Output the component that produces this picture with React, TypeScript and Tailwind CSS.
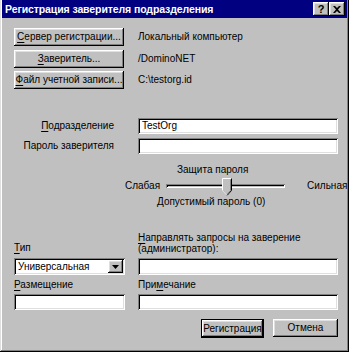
const raised =
  "shadow-[inset_-1px_-1px_#000,inset_1px_1px_#fff,inset_-2px_-2px_#808080,inset_2px_2px_#dfdfdf]";
const sunken =
  "shadow-[inset_1px_1px_#808080,inset_-1px_-1px_#fff,inset_2px_2px_#000,inset_-2px_-2px_#dfdfdf]";

function U({ children }: { children: string }) {
  return <span className="underline underline-offset-2">{children}</span>;
}

function Btn({ children, w = "w-[110px]", def = false }: { children: React.ReactNode; w?: string; def?: boolean }) {
  if (def) {
    return (
      <div className={`${w} h-[19px] border border-black bg-[#c0c0c0] flex-none`}>
        <div className={`h-full w-full flex items-center justify-center ${raised}`}>{children}</div>
      </div>
    );
  }
  return (
    <div className={`${w} h-[18px] bg-[#c0c0c0] flex-none flex items-center justify-center ${raised}`}>{children}</div>
  );
}

function Field({ w, h = "h-[16px]", children }: { w: string; h?: string; children?: React.ReactNode }) {
  return <div className={`${w} ${h} flex-none bg-white flex items-center pl-[4px] ${sunken}`}>{children}</div>;
}

export default function App() {
  return (
    <div
      className="w-[349px] h-[352px] bg-[#c0c0c0] text-black text-[10px] leading-[12px] whitespace-nowrap shadow-[inset_-1px_-1px_#000,inset_1px_0_#dfdfdf,inset_-2px_-2px_#808080,inset_2px_0_#fff] flex flex-col px-[2px] pb-[2px] overflow-hidden"
      style={{ fontFamily: '"Liberation Sans", Arial, sans-serif' }}
    >
      {/* Title bar */}
      <div className="h-[18px] bg-[#000080] flex items-center pl-[3px] pr-[2px]">
        <span className="text-white font-bold text-[10.5px] tracking-[-0.1px] flex-1">
          Регистрация заверителя подразделения
        </span>
        <div className={`w-[16px] h-[14px] bg-[#c0c0c0] flex items-center justify-center font-bold text-[11px] ${raised}`}>?</div>
        <div className={`w-[16px] h-[14px] bg-[#c0c0c0] flex items-center justify-center ${raised}`}>
          <svg width="8" height="7" viewBox="0 0 8 7">
            <path d="M0 0h2l2 2 2-2h2L5 3.5 8 7H6L4 5 2 7H0l3-3.5z" fill="#000" />
          </svg>
        </div>
      </div>

      <div className="flex flex-col pl-[12px] pr-[9px]">
        {/* Top buttons */}
        <div className="mt-[10px] flex items-center gap-[14px]">
          <Btn><span><U>С</U>ервер регистрации...</span></Btn>
          <span>Локальный компьютер</span>
        </div>
        <div className="mt-[4px] flex items-center gap-[14px]">
          <Btn><span><U>З</U>аверитель...</span></Btn>
          <span>/DominoNET</span>
        </div>
        <div className="mt-[3px] flex items-center gap-[14px]">
          <Btn><span><U>Ф</U>айл учетной записи...</span></Btn>
          <span>C:\testorg.id</span>
        </div>

        {/* Org fields */}
        <div className="mt-[29px] flex items-center gap-[24px]">
          <span className="w-[100px] flex-none text-right"><U>П</U>одразделение</span>
          <Field w="w-[200px]">TestOrg</Field>
        </div>
        <div className="mt-[4px] flex items-center gap-[24px]">
          <span className="w-[100px] flex-none text-right">Пароль заверителя</span>
          <Field w="w-[200px]" />
        </div>

        {/* Password strength */}
        <div className="mt-[10px] flex flex-col">
          <div className="pl-[163px]">Защита пароля</div>
          <div className="h-[20px] flex items-center pl-[111px]">
            <span className="w-[41px] flex-none">Слабая</span>
            <div className="relative flex-none w-[119px] h-[4px] shadow-[inset_1px_1px_#808080,inset_-1px_-1px_#fff,inset_2px_2px_#000] bg-[#c0c0c0]">
              <svg className="absolute left-[56px] top-[-6px]" width="10" height="18" viewBox="0 0 10 18">
                <path d="M0.5 0.5h9v12l-4.5 5-4.5-5z" fill="#c0c0c0" />
                <path d="M0.5 12.5v-12h9" stroke="#fff" fill="none" />
                <path d="M9.5 0.5v12l-4.5 5" stroke="#000" fill="none" />
                <path d="M8.5 1.5v11l-3.5 4" stroke="#808080" fill="none" />
                <path d="M0.5 12.5l4.5 5" stroke="#dfdfdf" fill="none" />
              </svg>
            </div>
            <span className="ml-[22px] flex-none">Сильная</span>
          </div>
          <div className="pl-[143px]">Допустимый пароль (0)</div>
        </div>

        {/* Type / admin */}
        <div className="mt-[24px] flex items-end gap-[13px]">
          <span className="w-[111px] flex-none"><U>Т</U>ип</span>
          <span className="leading-[11px]">
            <U>Н</U>аправлять запросы на заверение
            <br />
            (администратор):
          </span>
        </div>
        <div className="mt-[4px] flex items-center gap-[13px]">
          <div className={`w-[111px] h-[17px] flex-none bg-white flex items-center pl-[4px] pr-[2px] ${sunken}`}>
            <span className="flex-1">Универсальная</span>
            <div className={`w-[15px] h-[13px] bg-[#c0c0c0] flex items-center justify-center ${raised}`}>
              <svg width="7" height="4" viewBox="0 0 7 4"><path d="M0 0h7L3.5 4z" fill="#000" /></svg>
            </div>
          </div>
          <Field w="w-[200px]" h="h-[17px]" />
        </div>

        {/* Location / comment */}
        <div className="mt-[4px] flex items-center gap-[13px]">
          <span className="w-[111px] flex-none"><U>Р</U>азмещение</span>
          <span>При<U>м</U>ечание</span>
        </div>
        <div className="mt-[3px] flex items-center gap-[13px]">
          <Field w="w-[111px]" />
          <Field w="w-[200px]" />
        </div>

        {/* Buttons */}
        <div className="mt-[9px] flex justify-end gap-[9px]">
          <Btn w="w-[63px]" def>Регистрация</Btn>
          <Btn w="w-[65px]">Отмена</Btn>
        </div>
      </div>
    </div>
  );
}
